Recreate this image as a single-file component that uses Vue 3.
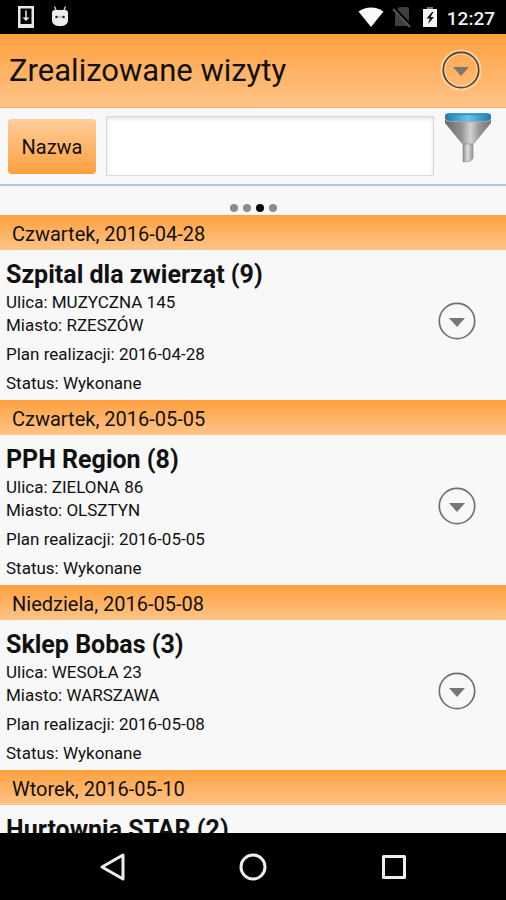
<script setup>
import { ref } from 'vue'

const query = ref('')
const pages = [0, 1, 2, 3]
const currentPage = 2

const visits = [
  { day: 'Czwartek, 2016-04-28', name: 'Szpital dla zwierząt (9)', street: 'MUZYCZNA 145', city: 'RZESZÓW', plan: '2016-04-28', status: 'Wykonane' },
  { day: 'Czwartek, 2016-05-05', name: 'PPH Region (8)', street: 'ZIELONA 86', city: 'OLSZTYN', plan: '2016-05-05', status: 'Wykonane' },
  { day: 'Niedziela, 2016-05-08', name: 'Sklep Bobas (3)', street: 'WESOŁA 23', city: 'WARSZAWA', plan: '2016-05-08', status: 'Wykonane' },
  { day: 'Wtorek, 2016-05-10', name: 'Hurtownia STAR (2)' }
]
</script>

<template>
  <div class="screen">
    <div class="status-bar">
      <div class="status-group notices">
        <svg width="18" height="24" viewBox="0 0 18 24">
          <path fill="#e8e8e8" fill-rule="evenodd" d="M1 1h16v22H1zM3.500 3.500v15.500h11V3.500z" />
          <path fill="none" stroke="#e8e8e8" stroke-width="1.500" d="M9 5.500v8" />
          <path fill="#e8e8e8" d="M5.500 12.500h7L9 16z" />
        </svg>
        <svg width="18" height="22" viewBox="0 0 18 22">
          <path fill="none" stroke="#c4c4c4" stroke-width="1.500" d="M3.500 0.500l2 5M14.500 0.500l-2 5" />
          <path fill="#ececec" d="M1 7c0-2 1-3 3-3h10c2 0 3 1 3 3v7c0 4-3 6-8 6s-8-2-8-6z" />
          <circle cx="5.500" cy="11" r="1.300" fill="#222" />
          <circle cx="12.500" cy="11" r="1.300" fill="#222" />
          <path stroke="#aaa" d="M7 11h4" />
        </svg>
      </div>
      <div class="status-group">
        <svg class="wifi" width="26" height="20" viewBox="0 0 26 20">
          <path fill="#fafafa" d="M0.500 4.500C8-1 18-1 25.500 4.500L13 20z" />
        </svg>
        <svg class="sim" width="20" height="22" viewBox="0 0 20 22">
          <path fill="#3e3e3e" d="M7 1h8q2 0 2 2v17H3V6z" />
          <path stroke="#000" stroke-width="3" d="M2 2l17 18" />
          <path stroke="#555" stroke-width="2" d="M1 3l17 18" />
        </svg>
        <svg class="battery" width="14" height="20" viewBox="0 0 14 20">
          <path fill="#777" d="M4 0h6v2H4z" />
          <path fill="#f5f5f5" d="M0 2h14v18H0z" />
          <path fill="#111" d="M9 5L3.500 11.500h3.300L5 17l6-7H7.500l3-5z" />
        </svg>
        <span class="clock">12:27</span>
      </div>
    </div>

    <header class="title-bar">
      <h1>Zrealizowane wizyty</h1>
      <button class="more halo" type="button" aria-label="Menu">
        <svg width="42" height="42" viewBox="0 0 42 42">
          <circle class="glow" cx="21" cy="21" r="18" />
          <circle class="ring" cx="21" cy="21" r="17.700" />
          <path class="arrow" d="M13 18h16L21 27z" />
        </svg>
      </button>
    </header>

    <form class="search" @submit.prevent>
      <button class="field-name" type="button">Nazwa</button>
      <input v-model="query" type="text" aria-label="Nazwa">
      <button class="filter" type="submit" aria-label="Filtr">
        <svg width="48" height="52" viewBox="0 0 48 52">
          <defs>
            <linearGradient id="steel">
              <stop offset="0" stop-color="#666" />
              <stop offset="0.350" stop-color="#929292" />
              <stop offset="0.550" stop-color="#d2d2d2" />
              <stop offset="0.750" stop-color="#969696" />
              <stop offset="1" stop-color="#777" />
            </linearGradient>
            <linearGradient id="spout">
              <stop offset="0" stop-color="#8c8c8c" />
              <stop offset="0.450" stop-color="#dedede" />
              <stop offset="1" stop-color="#949494" />
            </linearGradient>
            <linearGradient id="rim">
              <stop offset="0" stop-color="#2479a8" />
              <stop offset="0.500" stop-color="#64c6ee" />
              <stop offset="1" stop-color="#2479a8" />
            </linearGradient>
          </defs>
          <path fill="url(#steel)" d="M1 8h46v3L29 33H19L1 11z" />
          <path fill="url(#spout)" stroke="#909090" stroke-width="0.700" d="M19 32h10v14q-1 3-4 3.500L19 50z" />
          <path fill="#a8a8a8" d="M2 8q22 2 44 0v1.500q-22 1.500-44 0z" />
          <path fill="url(#rim)" d="M1 3Q2 1 6 1h36q4 0 5 2v4q-2 2-7 2H8q-5 0-7-2z" />
          <path fill="#2f8fc0" d="M3 2.500Q24 0.500 45 2.500L43 3.500Q24 2.500 5 3.500z" />
        </svg>
      </button>
    </form>

    <div class="pager">
      <span v-for="page in pages" :key="page" class="dot" :class="{ active: page === currentPage }"></span>
    </div>

    <main class="list">
      <section v-for="visit in visits" :key="visit.day">
        <h2>{{ visit.day }}</h2>
        <article>
          <div class="details">
            <h3>{{ visit.name }}</h3>
            <template v-if="visit.street">
              <p>Ulica: {{ visit.street }}</p>
              <p>Miasto: {{ visit.city }}</p>
              <p class="spaced">Plan realizacji: {{ visit.plan }}</p>
              <p class="spaced">Status: {{ visit.status }}</p>
            </template>
          </div>
          <button v-if="visit.street" class="more" type="button" :aria-label="visit.name">
            <svg width="42" height="42" viewBox="0 0 42 42">
              <circle class="ring" cx="21" cy="21" r="17.700" />
              <path class="arrow" d="M13 18h16L21 27z" />
            </svg>
          </button>
        </article>
      </section>
    </main>

    <nav class="nav-bar">
      <button type="button" aria-label="Wstecz">
        <svg width="30" height="30" viewBox="0 0 30 30"><path d="M26 3v24L5 15z" /></svg>
      </button>
      <button type="button" aria-label="Ekran główny">
        <svg width="30" height="30" viewBox="0 0 30 30"><circle cx="15" cy="15" r="12" /></svg>
      </button>
      <button type="button" aria-label="Ostatnie">
        <svg width="30" height="30" viewBox="0 0 30 30"><path d="M4.500 4.500h21v21h-21z" /></svg>
      </button>
    </nav>
  </div>
</template>

<style>
body {
  margin: 0;
  background: #000;
}
</style>

<style scoped>
.screen {
  display: flex;
  flex-direction: column;
  height: 100vh;
  overflow: hidden;
  background: #f8f8f8;
  color: #111;
  font-family: Roboto, "Liberation Sans", sans-serif;
}

h1, h2, h3, p {
  margin: 0;
  font-weight: 400;
}

button {
  padding: 0;
  border: 0;
  background: none;
  color: inherit;
  font-family: inherit;
}

svg {
  display: block;
}

.status-bar {
  flex: none;
  display: flex;
  align-items: center;
  justify-content: space-between;
  height: 34px;
  padding: 0 11px 0 17px;
  background: #000;
}

.status-group {
  display: flex;
  align-items: center;
}

.notices {
  gap: 16px;
}

.sim {
  margin-left: 8px;
}

.battery {
  margin: 0 10px 0 11px;
}

.clock {
  padding-top: 2px;
  color: #f0f0f0;
  font-size: 19px;
  font-weight: 500;
}

.title-bar {
  flex: none;
  display: flex;
  align-items: center;
  justify-content: space-between;
  box-sizing: border-box;
  height: 74px;
  padding: 0 24px 2px 9px;
  border-bottom: 1px solid #f2b06c;
  background: linear-gradient(#ffa03e, #ffc488);
}

h1 {
  padding-top: 2px;
  font-size: 31px;
}

.ring {
  fill: none;
  stroke: #707070;
  stroke-width: 1.7;
}

.arrow {
  fill: #767676;
}

.halo .ring {
  stroke: #51402f;
}

.glow {
  fill: none;
  stroke: #ffd0a0;
  stroke-width: 5;
}

.search {
  flex: none;
  display: flex;
  align-items: flex-start;
  gap: 10px;
  box-sizing: border-box;
  height: 78px;
  padding: 4px 14px 0 8px;
  border-bottom: 2px solid #a3cbe4;
}

.field-name {
  flex: none;
  width: 88px;
  height: 55px;
  margin-top: 7px;
  border-radius: 4px;
  background: linear-gradient(#ffcd9c, #ff9f3c);
  font-size: 20px;
}

input {
  flex: 1;
  min-width: 0;
  box-sizing: border-box;
  height: 60px;
  margin-top: 4px;
  padding: 0 10px;
  border: 1px solid #dadada;
  border-radius: 0;
  background: #fff;
  box-shadow: inset 0 2px 4px #e4e4e4;
  font-family: inherit;
  font-size: 20px;
  outline: none;
}

.filter {
  flex: none;
}

.pager {
  flex: none;
  display: flex;
  align-items: flex-end;
  justify-content: center;
  gap: 5px;
  box-sizing: border-box;
  height: 29px;
  padding-bottom: 3px;
}

.dot {
  width: 8px;
  height: 8px;
  border-radius: 50%;
  background: #8c8c8c;
}

.dot.active {
  background: #0a0a0a;
}

.list {
  flex: 1;
  min-height: 0;
  overflow: hidden;
}

h2 {
  padding: 3px 12px 0;
  background: linear-gradient(#ffa03e, #ffc488);
  font-size: 20px;
  line-height: 32px;
}

article {
  display: flex;
  align-items: flex-start;
  justify-content: space-between;
  box-sizing: border-box;
  min-height: 150px;
  padding: 8px 28px 5px 6px;
}

article .more {
  margin-top: 42px;
}

h3 {
  font-size: 25px;
  font-weight: 700;
  line-height: 33px;
}

p {
  font-size: 17px;
  line-height: 23px;
}

.spaced {
  margin-top: 6px;
}

.nav-bar {
  flex: none;
  display: flex;
  align-items: center;
  justify-content: center;
  gap: 111px;
  height: 67px;
  background: #000;
}

.nav-bar svg {
  fill: none;
  stroke: #eee;
  stroke-width: 3;
  stroke-linejoin: round;
}
</style>
